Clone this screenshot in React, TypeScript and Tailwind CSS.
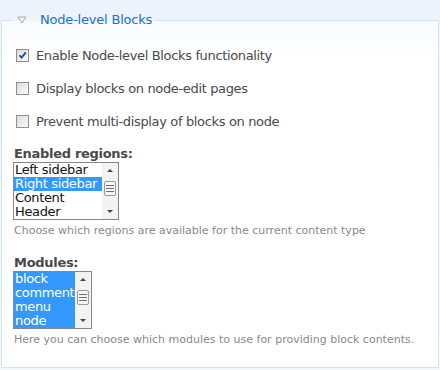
import React from 'react'

const CheckRow = ({ label, checked }: { label: string; checked?: boolean }) => (
  <label className="flex items-center h-[13px] gap-[7px]">
    <span className="relative w-[13px] h-[13px] border border-[#8e8f8f] bg-gradient-to-br from-[#dcdcd7] to-[#fbfbf9] shrink-0">
      {checked && (
        <svg viewBox="0 0 11 11" className="absolute inset-0 w-[11px] h-[11px]">
          <path d="M2.5 5.2 L4.6 7.6 L8.8 2.4" stroke="#213f9b" strokeWidth="1.7" fill="none" />
        </svg>
      )}
    </span>
    <span className="tracking-[-0.35px]">{label}</span>
  </label>
)

const Scrollbar = () => (
  <div className="w-[16px] h-[56px] bg-[#f3f3f3] flex flex-col items-center">
    <svg viewBox="0 0 16 14" className="w-[16px] h-[14px] shrink-0">
      <path d="M5 9 L8 6 L11 9 Z" fill="#444" />
    </svg>
    <div className="w-[12px] h-[15px] mt-[4px] border border-[#9a9a9a] rounded-[2px] bg-[#f6f6f6] flex flex-col items-center justify-center gap-[2px] shrink-0">
      <span className="w-[8px] h-[1px] bg-[#6f6f6f]" />
      <span className="w-[8px] h-[1px] bg-[#6f6f6f]" />
      <span className="w-[8px] h-[1px] bg-[#6f6f6f]" />
    </div>
    <div className="flex-1" />
    <svg viewBox="0 0 16 14" className="w-[16px] h-[14px] shrink-0">
      <path d="M5 5 L8 8 L11 5 Z" fill="#444" />
    </svg>
  </div>
)

const ListBox = ({ items, selected, width }: { items: string[]; selected: string[]; width: string }) => (
  <div className={`flex border border-[#828790] bg-white ${width}`}>
    <div className="flex-1 flex flex-col">
      {items.map((it) => (
        <div
          key={it}
          className={`h-[14px] leading-[14px] text-[13px] pl-[1px] tracking-[-0.35px] ${
            selected.includes(it) ? 'bg-[#3399ff] text-white' : 'text-[#111]'
          }`}
        >
          {it}
        </div>
      ))}
    </div>
    <Scrollbar />
  </div>
)

export default function App() {
  return (
    <div
      className="w-[440px] h-[370px] bg-gradient-to-b from-[#ecf3fa] to-[#f3f8fc] pt-[12px] px-[1px] text-[13px] text-[#494949] overflow-hidden"
      style={{ fontFamily: '"DejaVu Sans", Verdana, sans-serif' }}
    >
      <fieldset className="h-[356px] border border-[#d2e5f3] bg-gradient-to-b from-[#f7fbfd] to-white to-[40px] px-[12px]">
        <legend className="ml-[-1px] px-[4px] flex items-center text-[#1a72c4] text-[13px] leading-[16px] tracking-[-0.2px]">
          <svg viewBox="0 0 10 8" className="w-[10px] h-[8px] mr-[13px]">
            <path d="M1 1 L9 1 L5 7 Z" fill="none" stroke="#a9a9a9" strokeWidth="1" />
          </svg>
          Node-level Blocks
        </legend>

        <div className="flex flex-col gap-[20px] pl-[2px] pt-[21px]">
          <CheckRow label="Enable Node-level Blocks functionality" checked />
          <CheckRow label="Display blocks on node-edit pages" />
          <CheckRow label="Prevent multi-display of blocks on node" />
        </div>

        <div className="mt-[18px] font-bold leading-[16px] tracking-[-0.3px]">Enabled regions:</div>
        <div className="-ml-[1px]">
          <ListBox
            items={['Left sidebar', 'Right sidebar', 'Content', 'Header']}
            selected={['Right sidebar']}
            width="w-[106px]"
          />
        </div>
        <div className="mt-[4px] text-[11px] leading-[14px] text-[#898989]">
          Choose which regions are available for the current content type
        </div>

        <div className="mt-[17px] font-bold leading-[16px] tracking-[-0.3px]">Modules:</div>
        <div className="-ml-[1px]">
          <ListBox
            items={['block', 'comment', 'menu', 'node']}
            selected={['block', 'comment', 'menu', 'node']}
            width="w-[79px]"
          />
        </div>
        <div className="mt-[4px] text-[11px] leading-[14px] text-[#898989]">
          Here you can choose which modules to use for providing block contents.
        </div>
      </fieldset>
    </div>
  )
}
